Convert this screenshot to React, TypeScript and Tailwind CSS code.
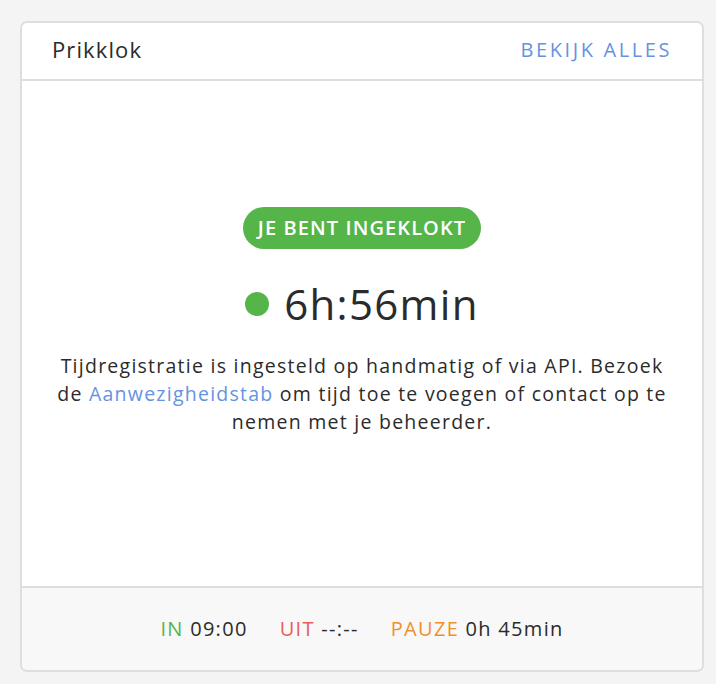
export default function App() {
  return (
    <div className="min-h-[684px] w-[716px] bg-[#f4f4f4] pt-[21px] pl-[20px]" style={{ fontFamily: '"Open Sans", "Noto Sans", sans-serif' }}>
      <div className="w-[684px] h-[651px] flex flex-col rounded-[7px] border-2 border-[#dedede] bg-white overflow-hidden">
        {/* header */}
        <div className="h-[58px] shrink-0 flex items-center justify-between pl-[30px] pr-[30px] pb-[3px] border-b-2 border-[#dedede]">
          <span className="text-[22px] tracking-[1.1px] text-[#2b2b2b]">Prikklok</span>
          <span className="text-[20px] tracking-[2.6px] text-[#6593e0]">BEKIJK ALLES</span>
        </div>

        {/* body */}
        <div className="flex-1 flex flex-col items-center pt-[126px]">
          <div className="h-[42px] px-[15px] flex items-center rounded-full bg-[#55b549] text-white text-[20px] font-semibold tracking-[1.1px]">
            JE BENT INGEKLOKT
          </div>
          <div className="mt-[27px] flex items-center gap-[15px]">
            <span className="w-[24px] h-[24px] rounded-full bg-[#55b549]" />
            <span className="text-[42px] leading-[56px] tracking-[1.3px] text-[#2b2b2b]">6h:56min</span>
          </div>
          <p className="mt-[20px] w-[630px] text-center text-[19.5px] leading-[28px] tracking-[1.25px] text-[#2b2b2b]">
            Tijdregistratie is ingesteld op handmatig of via API. Bezoek de <span className="text-[#6593e0]">Aanwezigheidstab</span> om tijd toe te voegen of contact op te nemen met je beheerder.
          </p>
        </div>

        {/* footer */}
        <div className="h-[84px] shrink-0 flex items-center justify-center gap-[32px] border-t-2 border-[#dedede] bg-[#f8f8f8] text-[20px] tracking-[1.3px] text-[#2b2b2b]">
          <span><span className="text-[#55b549]">IN</span> 09:00</span>
          <span><span className="text-[#e85c5c]">UIT</span> --:--</span>
          <span><span className="text-[#f0902d]">PAUZE</span> 0h 45min</span>
        </div>
      </div>
    </div>
  )
}
